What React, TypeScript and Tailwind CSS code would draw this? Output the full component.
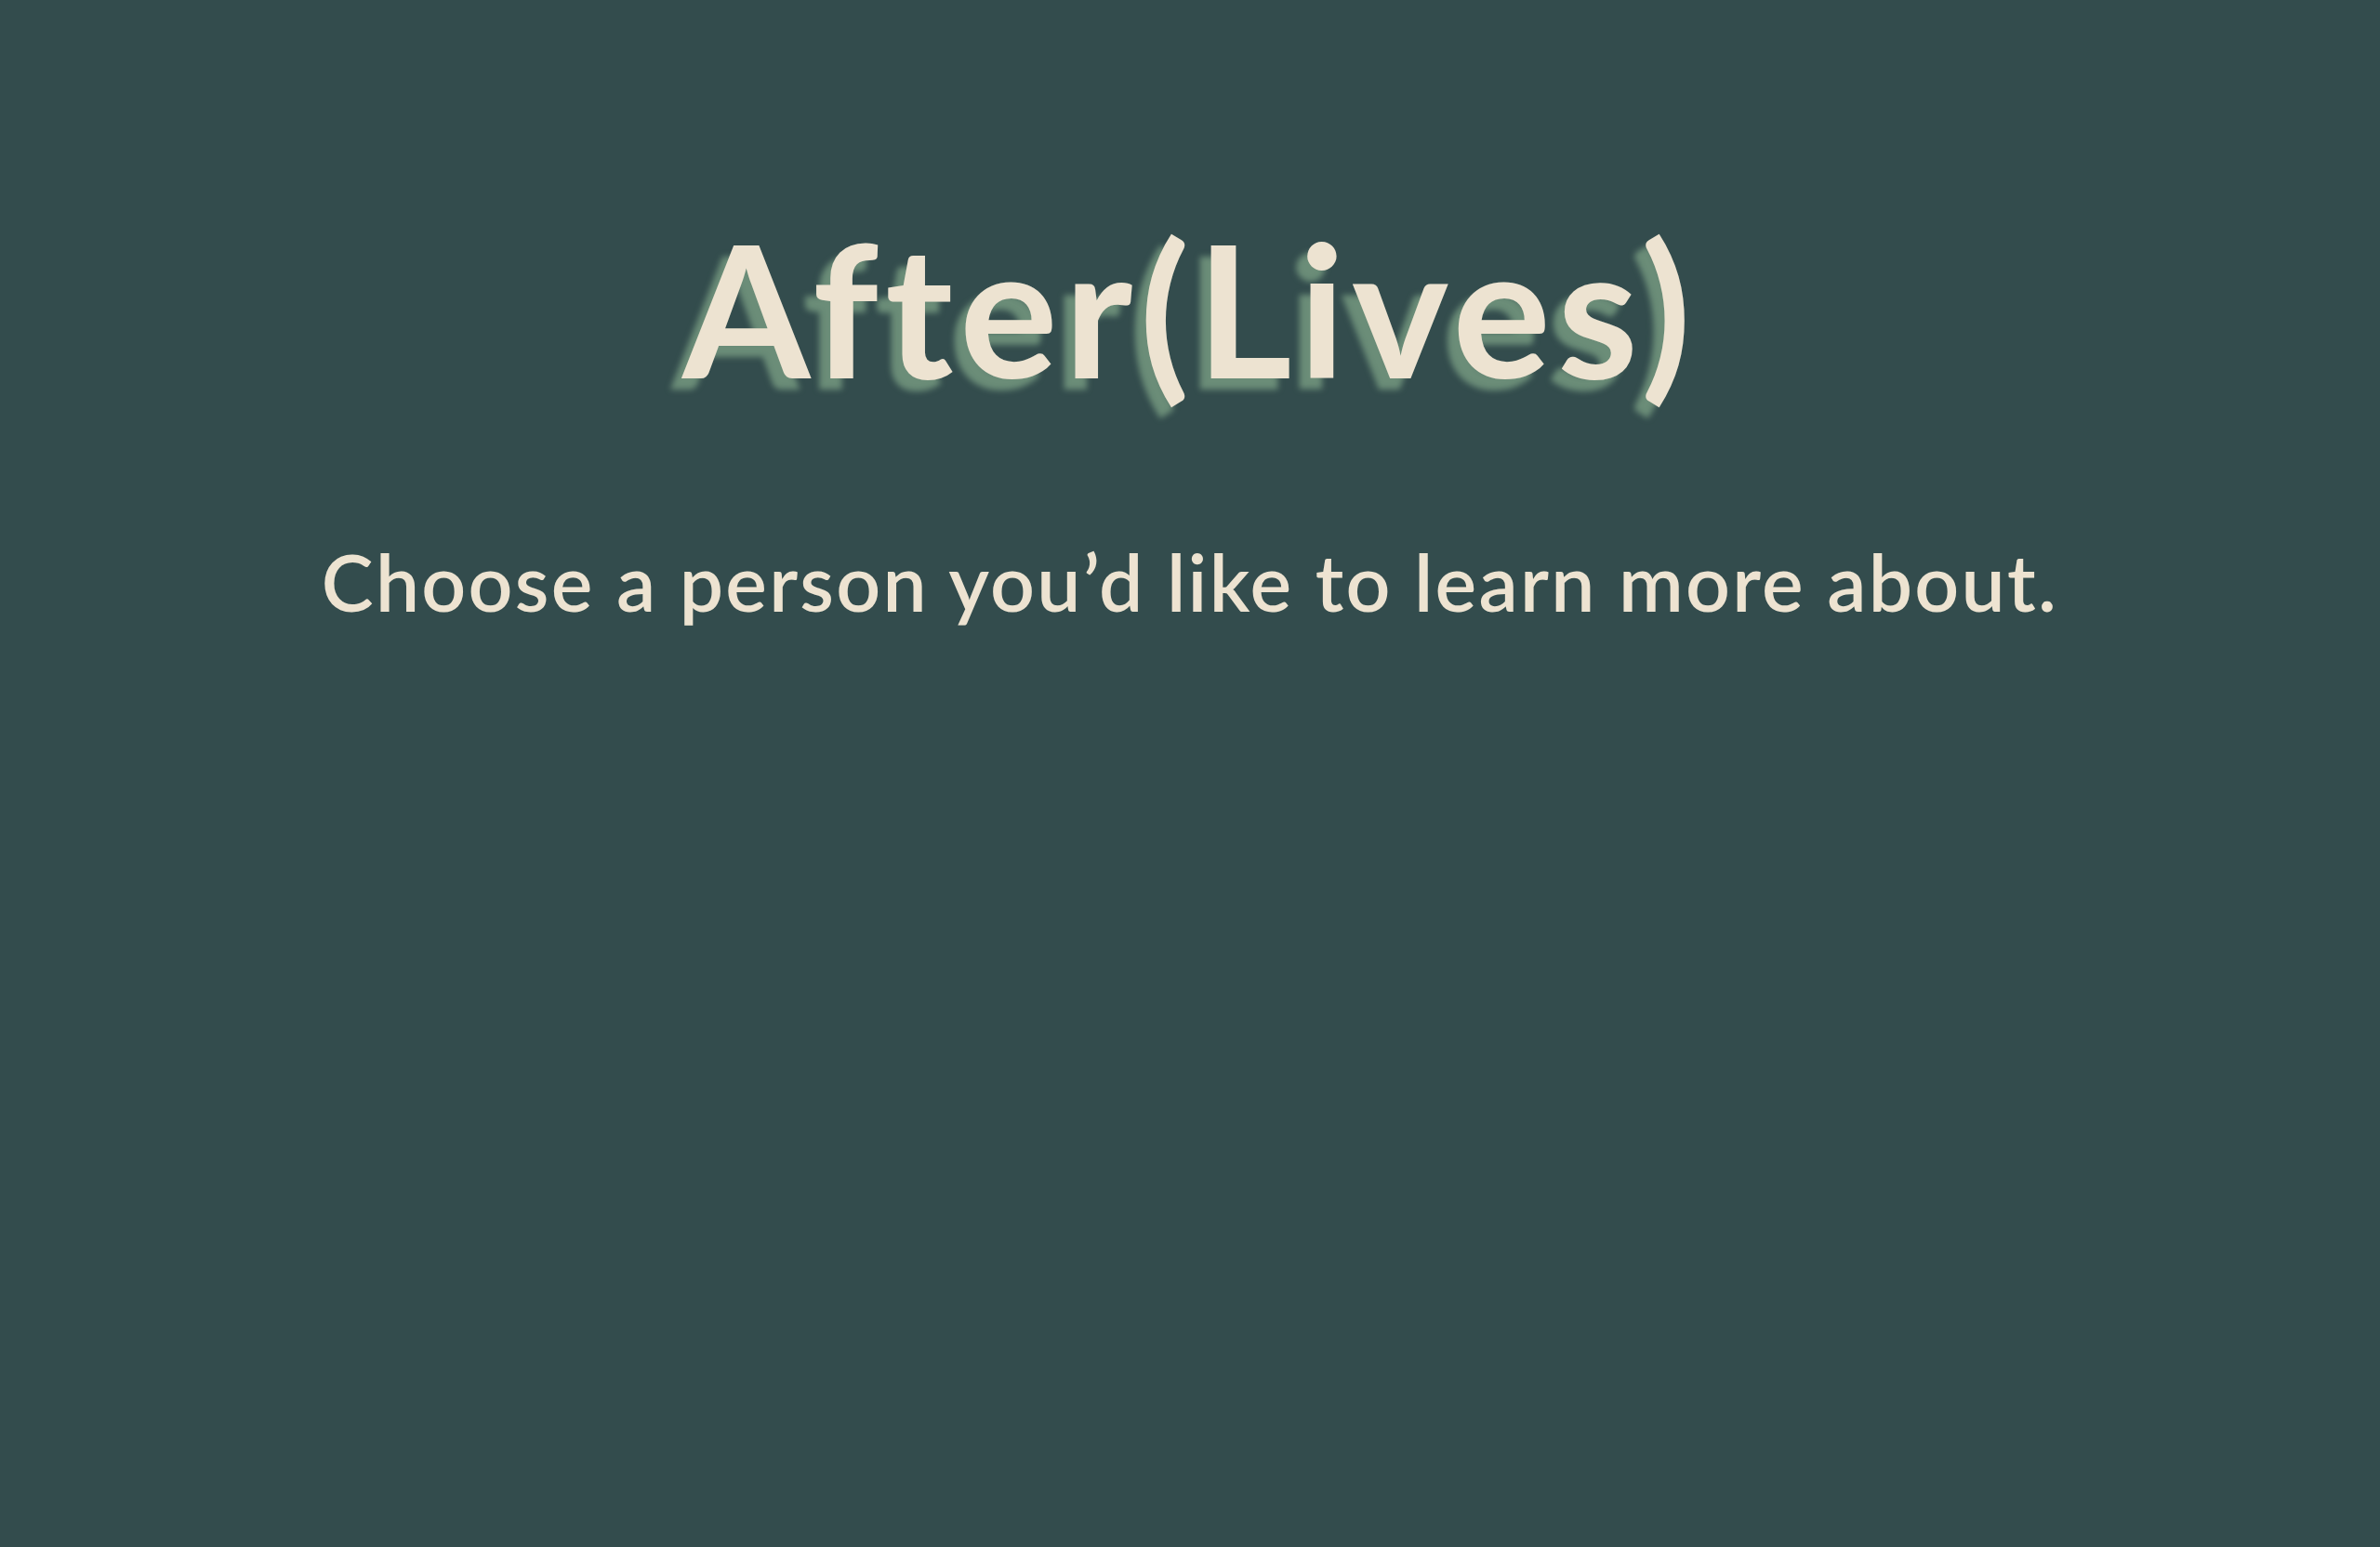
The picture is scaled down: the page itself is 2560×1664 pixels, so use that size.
export default function App() {
  return (
    <main className="min-h-screen w-full bg-[#334c4d] font-['Lato','Noto_Sans',sans-serif] text-[#ede3d1]">
      <div className="flex flex-col items-center pt-[232px]">
        <h1 className="text-[198px] font-bold leading-none tracking-[7px] [text-shadow:-12px_12px_6px_#6b8d78]">
          After(Lives)
        </h1>
        <p className="mt-[154px] text-[84px] font-semibold leading-none tracking-[2.3px]">
          Choose a person you’d like to learn more about.
        </p>
      </div>
    </main>
  );
}
